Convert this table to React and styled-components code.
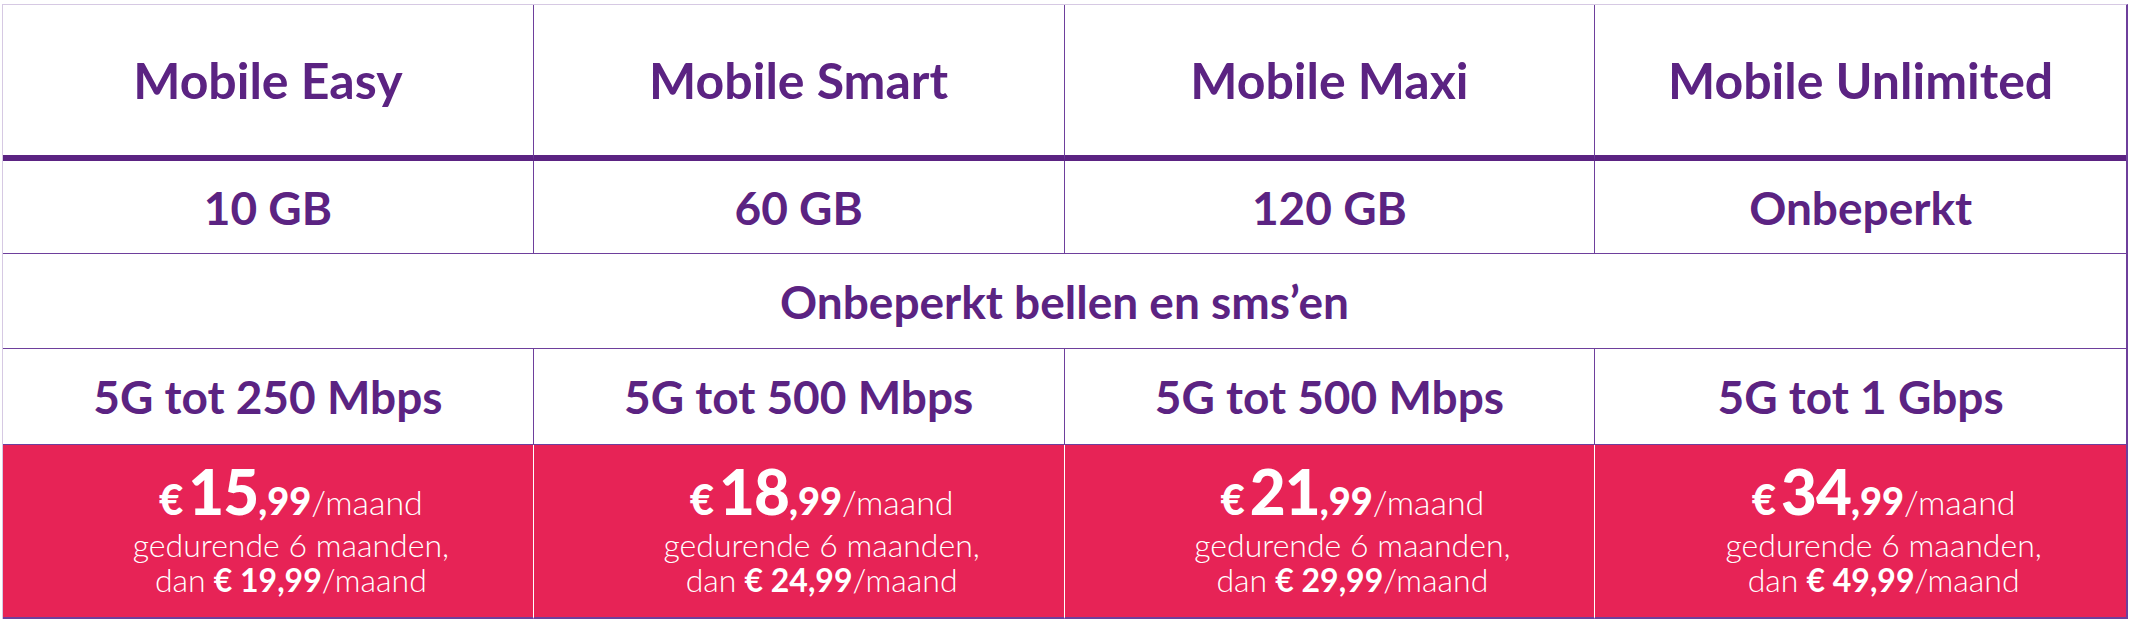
import React from "react";
import styled, { createGlobalStyle } from "styled-components";

const purple = "#5b2382";
const line = "#6e3f9c";
const red = "#e72356";

const GlobalStyle = createGlobalStyle`
  html, body {
    margin: 0;
    padding: 0;
    background: #ffffff;
  }
  body {
    font-family: Lato, "Open Sans", "Liberation Sans", sans-serif;
  }
`;

const Page = styled.div`
  width: 2130px;
  height: 624px;
  padding: 4px 2px 6px 2px;
  box-sizing: border-box;
  background: #fff;
`;

const Table = styled.div`
  display: grid;
  grid-template-columns: repeat(4, 1fr);
  border-top: 1px solid #d6c9e3;
  border-left: 1px solid #d6c9e3;
  border-right: 2px solid ${line};
  box-sizing: border-box;
`;

const Cell = styled.div`
  display: flex;
  align-items: center;
  justify-content: center;
  box-sizing: border-box;
  height: ${(p) => p.$h}px;
  grid-column: ${(p) => (p.$span ? "1 / -1" : "auto")};
  border-right: ${(p) => (p.$last || p.$span ? "none" : `1px solid ${p.$red ? "#ffffff" : line}`)};
  border-bottom: ${(p) => p.$bottom || `1px solid ${line}`};
  background: ${(p) => (p.$red ? red : "#ffffff")};
  color: ${purple};
  font-weight: 700;
  font-size: ${(p) => p.$size || 46}px;
  white-space: nowrap;
`;

const Price = styled.div`
  display: flex;
  flex-direction: column;
  align-items: center;
  color: #ffffff;
  padding-left: 46px;
`;

const PriceLine = styled.div`
  display: flex;
  align-items: baseline;
  line-height: ${(p) => p.$lh}px;
  font-size: ${(p) => p.$size}px;
  font-weight: 300;
`;

const Euro = styled.span`
  font-weight: 900;
  font-size: 42px;
  margin-right: 5px;
`;

const Big = styled.span`
  font-weight: 900;
  font-size: 62px;
  letter-spacing: -1px;
`;

const Cents = styled.span`
  font-weight: 900;
  font-size: 38px;
`;

const Strong = styled.span`
  font-weight: 700;
  margin-left: 8px;
`;

const plans = [
  { name: "Mobile Easy", data: "10 GB", speed: "5G tot 250 Mbps", promo: "15", after: "19,99" },
  { name: "Mobile Smart", data: "60 GB", speed: "5G tot 500 Mbps", promo: "18", after: "24,99" },
  { name: "Mobile Maxi", data: "120 GB", speed: "5G tot 500 Mbps", promo: "21", after: "29,99" },
  { name: "Mobile Unlimited", data: "Onbeperkt", speed: "5G tot 1 Gbps", promo: "34", after: "49,99" },
];

export default function App() {
  return (
    <Page>
      <GlobalStyle />
      <Table>
        {plans.map((p, i) => (
          <Cell key={p.name} $h={156} $size={50} $last={i === 3} $bottom={`6px solid ${purple}`}>
            {p.name}
          </Cell>
        ))}
        {plans.map((p, i) => (
          <Cell key={p.data} $h={93} $last={i === 3}>
            {p.data}
          </Cell>
        ))}
        <Cell $span $h={95}>Onbeperkt bellen en sms’en</Cell>
        {plans.map((p, i) => (
          <Cell key={p.name + "s"} $h={96} $last={i === 3}>
            {p.speed}
          </Cell>
        ))}
        {plans.map((p, i) => (
          <Cell key={p.name + "p"} $h={174} $red $last={i === 3} $bottom={`2px solid ${line}`}>
            <Price>
              <PriceLine $lh={54} $size={34}>
                <Euro>€</Euro>
                <Big>{p.promo}</Big>
                <Cents>,99</Cents>/maand
              </PriceLine>
              <PriceLine $lh={32} $size={32}>gedurende 6 maanden,</PriceLine>
              <PriceLine $lh={38} $size={32}>
                dan<Strong>€ {p.after}</Strong>/maand
              </PriceLine>
            </Price>
          </Cell>
        ))}
      </Table>
    </Page>
  );
}
